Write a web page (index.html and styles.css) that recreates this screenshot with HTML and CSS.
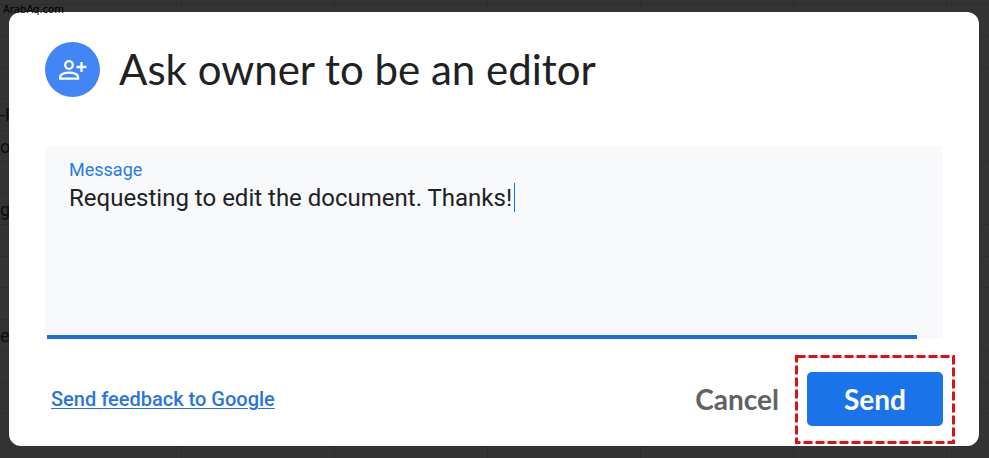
FILE: index.html
```
<!DOCTYPE html>
<html lang="en">
<head>
    <meta charset="UTF-8">
    <meta name="viewport" content="width=device-width, initial-scale=1.0">
    <title>Ask owner to be an editor</title>
    <link rel="stylesheet" href="styles.css">
</head>
<body>
    <div class="sheet">
        <div></div><div></div><div></div>
        <div class="cell">-P</div>
        <div class="cell">o</div>
        <div></div>
        <div class="cell">g</div>
        <div></div><div></div><div></div>
        <div class="cell">e</div>
        <div></div><div></div><div></div>
    </div>
    <span class="watermark">ArabAq.com</span>

    <form class="dialog" role="dialog" aria-labelledby="dialog-title">
        <header class="dialog-header">
            <span class="badge">
                <svg class="badge-icon" viewBox="0 0 28 22" aria-hidden="true">
                    <circle cx="10" cy="6" r="3.8"/>
                    <path d="M1.2 19.7v-1.8c0-2.7 4.5-4.2 8.9-4.2s8.9 1.5 8.9 4.2v1.8z"/>
                    <path d="M22.5 3v10M17.5 8h10"/>
                </svg>
            </span>
            <h1 id="dialog-title">Ask owner to be an editor</h1>
        </header>

        <div class="field">
            <label for="message">Message</label>
            <textarea id="message" spellcheck="false">Requesting to edit the document. Thanks!</textarea>
            <span class="caret"></span>
        </div>

        <footer class="dialog-footer">
            <a class="feedback" href="#">Send feedback to Google</a>
            <button type="button" class="cancel">Cancel</button>
            <div class="send-wrap">
                <button type="submit" class="send">Send</button>
                <svg class="highlight" viewBox="0 0 160 89" aria-hidden="true">
                    <rect x="1.5" y="1.5" width="157" height="86"/>
                </svg>
            </div>
        </footer>
    </form>
</body>
</html>
```

FILE: styles.css
```
* {
    box-sizing: border-box;
}

body {
    margin: 0;
    min-height: 100vh;
    padding: 12px 10px 12px 9px;
    background-color: #333;
    font-family: Roboto, "Liberation Sans", sans-serif;
    overflow: hidden;
}

/* dimmed spreadsheet behind the dialog */
.sheet {
    position: absolute;
    inset: 0;
    padding-top: 4px;
    display: grid;
    grid-template-rows: repeat(7, 31px 32px);
    background: repeating-linear-gradient(to right, transparent 0 152px, #2d2d2d 152px 153px) 29px 0;
    overflow: hidden;
}

.sheet div {
    border-top: 1px solid #2d2d2d;
}

.sheet .cell {
    padding-right: 1px;
    width: 9px;
    font-size: 18px;
    line-height: 32px;
    white-space: nowrap;
    color: #0c0c0c;
}

.watermark {
    position: absolute;
    top: 3px;
    left: 3px;
    z-index: 2;
    font-family: "DejaVu Sans", sans-serif;
    font-size: 10px;
    line-height: 14px;
    color: #000;
}

.dialog {
    position: relative;
    padding: 30px 36px 20px;
    background: #fff;
    border-radius: 12px;
}

.dialog-header {
    display: flex;
    align-items: flex-start;
    gap: 19px;
    margin-bottom: 49px;
}

.badge {
    width: 55px;
    height: 55px;
    display: flex;
    align-items: center;
    justify-content: center;
    background: #4285f4;
    border-radius: 50%;
}

.badge-icon {
    width: 28px;
    height: 22px;
    overflow: visible;
    fill: none;
    stroke: #fff;
    stroke-width: 2.3;
}

h1 {
    margin: 0;
    font-family: Lato, sans-serif;
    font-size: 42px;
    font-weight: 400;
    line-height: 54px;
    color: #202124;
}

.field {
    position: relative;
    display: flex;
    flex-direction: column;
    height: 193px;
    padding: 12px 24px 0;
    background: #f8f9fb;
    border-radius: 4px;
}

.field::after {
    content: "";
    position: absolute;
    left: 2px;
    right: 26px;
    bottom: 0;
    height: 4px;
    background: #1a6fd8;
}

.field label {
    font-size: 18px;
    line-height: 24px;
    color: #2a7be8;
}

.field textarea {
    flex: 1;
    width: 100%;
    padding: 0;
    border: 0;
    outline: 0;
    resize: none;
    background: transparent;
    font: 24px/32px Roboto, sans-serif;
    color: #202124;
}

.caret {
    position: absolute;
    top: 37px;
    left: 469px;
    width: 1px;
    height: 29px;
    background: #1a6fd8;
}

.dialog-footer {
    display: flex;
    align-items: center;
    gap: 28px;
    margin-top: 33px;
    padding-left: 6px;
}

.feedback {
    margin-right: auto;
    font-size: 20px;
    font-weight: 500;
    color: #2a75dc;
    text-underline-offset: 2px;
    text-decoration-thickness: 1px;
}

button {
    border: 0;
    font-family: Lato, sans-serif;
    font-size: 28px;
    font-weight: 700;
    line-height: 34px;
    cursor: pointer;
}

.cancel {
    padding: 0;
    background: none;
    color: #5f6368;
}

.send-wrap {
    position: relative;
}

.send {
    display: block;
    width: 136px;
    height: 54px;
    background: #1a73e8;
    border-radius: 5px;
    color: #fff;
}

.highlight {
    position: absolute;
    top: -17px;
    left: -12px;
    width: 160px;
    height: 89px;
    fill: none;
    stroke: #e01010;
    stroke-width: 3;
    stroke-dasharray: 9 3;
    pointer-events: none;
}
```
